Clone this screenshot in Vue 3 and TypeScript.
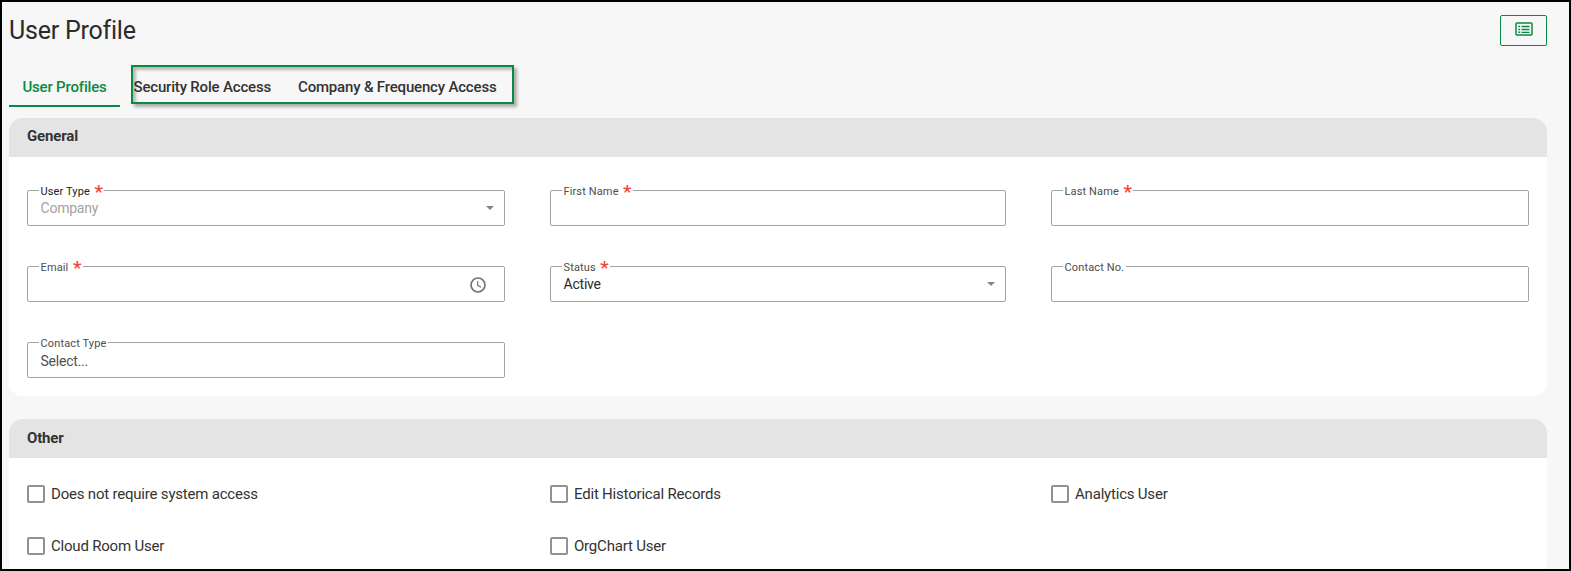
<script setup lang="ts">
import { ref } from 'vue'

interface Field {
  label: string
  required?: boolean
  value?: string
  tone?: 'disabled' | 'placeholder'
  icon?: 'arrow' | 'clock'
}

const tabs = ['User Profiles', 'Security Role Access', 'Company & Frequency Access']
const activeTab = ref(0)

const fields: Field[] = [
  { label: 'User Type', required: true, value: 'Company', tone: 'disabled', icon: 'arrow' },
  { label: 'First Name', required: true },
  { label: 'Last Name', required: true },
  { label: 'Email', required: true, icon: 'clock' },
  { label: 'Status', required: true, value: 'Active', icon: 'arrow' },
  { label: 'Contact No.' },
  { label: 'Contact Type', value: 'Select...', tone: 'placeholder' },
]

const options = ref([
  { label: 'Does not require system access', checked: false },
  { label: 'Edit Historical Records', checked: false },
  { label: 'Analytics User', checked: false },
  { label: 'Cloud Room User', checked: false },
  { label: 'OrgChart User', checked: false },
])
</script>

<template>
  <div class="page">
    <header class="top">
      <h1>User Profile</h1>
      <button class="list-btn" type="button" aria-label="List">
        <svg width="18" height="14" viewBox="0 0 18 14" fill="none" stroke="#0a8a43">
          <rect x="1" y="1" width="16" height="12" rx="1" stroke-width="1.5" />
          <path d="M6.5 4.5h8M6.5 7.5h8M6.5 10.3h8" stroke-width="1.3" />
          <path d="M3.3 4.5h1.8M3.3 7.5h1.8M3.3 10.3h1.8" stroke-width="1.4" />
        </svg>
      </button>
    </header>

    <nav class="tabs">
      <button class="tab" :class="{ active: activeTab === 0 }" type="button" @click="activeTab = 0">{{ tabs[0] }}</button>
      <div class="marked">
        <button
          v-for="(tab, i) in tabs.slice(1)"
          :key="tab"
          class="tab"
          :class="{ active: activeTab === i + 1 }"
          type="button"
          @click="activeTab = i + 1"
        >{{ tab }}</button>
      </div>
    </nav>

    <section class="card general">
      <h2>General</h2>
      <div class="grid fields">
        <div v-for="f in fields" :key="f.label" class="field">
          <span class="label" :class="{ strong: f.tone === 'disabled' }">{{ f.label }}<span v-if="f.required" class="star">*</span></span>
          <span class="value" :class="f.tone">{{ f.value }}</span>
          <svg v-if="f.icon === 'arrow'" class="arrow" width="8" height="4" viewBox="0 0 8 4"><path d="M0 0h8L4 4z" fill="#858585" /></svg>
          <svg v-if="f.icon === 'clock'" class="clock" width="16" height="16" viewBox="0 0 16 16" fill="none" stroke="#6f7679" stroke-width="1.7">
            <circle cx="8" cy="8" r="7" />
            <path d="M7.7 4v4.3l3.4 2" stroke-width="1.2" />
          </svg>
        </div>
      </div>
    </section>

    <section class="card other">
      <h2>Other</h2>
      <div class="grid checks">
        <label v-for="o in options" :key="o.label" class="check">
          <input v-model="o.checked" type="checkbox" />
          <span>{{ o.label }}</span>
        </label>
      </div>
    </section>
  </div>
</template>

<style>
body {
  overflow: hidden;
}
</style>

<style scoped>
.page {
  box-sizing: border-box;
  width: 1571px;
  height: 571px;
  overflow: hidden;
  border: 2px solid #000;
  background: #f7f7f7;
  padding: 13px 22px 0 7px;
  font-family: Roboto, 'Liberation Sans', sans-serif;
  color: #333;
}
.top {
  display: flex;
  justify-content: space-between;
  align-items: flex-start;
  height: 50px;
}
h1 {
  margin: 0;
  font-size: 25px;
  line-height: 31px;
  font-weight: 400;
  letter-spacing: -0.22px;
  color: #2b2b2b;
}
.list-btn {
  box-sizing: border-box;
  width: 47px;
  height: 31px;
  padding: 0 0 3px 0;
  display: flex;
  align-items: center;
  justify-content: center;
  border: 1px solid #0a8a43;
  border-radius: 2px;
  background: transparent;
}
.tabs {
  display: flex;
  gap: 11px;
  height: 53px;
}
.tab {
  border: 0;
  background: none;
  padding: 0;
  font: 500 15px/20px Roboto, 'Liberation Sans', sans-serif;
  letter-spacing: -0.18px;
  color: #333;
  white-space: nowrap;
}
.tabs > .tab {
  box-sizing: border-box;
  width: 111px;
  height: 42px;
  padding-top: 3px;
  border-bottom: 2px solid #0a8a43;
}
.tab.active {
  color: #0a8a43;
}
.marked {
  box-sizing: border-box;
  width: 383px;
  height: 39px;
  display: flex;
  gap: 27px;
  align-items: center;
  padding: 4px 0 0 0.5px;
  border: 2px solid #0a8a43;
  box-shadow: 3px 3px 3px rgba(0, 0, 0, 0.3), inset 3px 3px 3px rgba(0, 0, 0, 0.25);
}
.card {
  border-radius: 14px;
  background: #fff;
  overflow: hidden;
}
.general {
  height: 278px;
  margin-bottom: 23px;
}
.other {
  height: 156px;
}
h2 {
  box-sizing: border-box;
  margin: 0;
  height: 39px;
  padding: 0 18px;
  font-size: 15px;
  line-height: 36px;
  letter-spacing: -0.15px;
  font-weight: 700;
  background: #e4e4e4;
}
.other h2 {
  line-height: 38px;
}
.grid {
  display: grid;
  grid-template-columns: 478px 456px 478px;
  column-gap: 45px;
  padding: 0 18px;
}
.fields {
  padding-top: 33px;
  row-gap: 40px;
}
.field {
  box-sizing: border-box;
  position: relative;
  height: 36px;
  border: 1px solid #a3a3a3;
  border-radius: 2px;
  display: flex;
  align-items: center;
  padding: 0 10px 0 12.5px;
}
.label {
  position: absolute;
  left: 11px;
  top: -7px;
  height: 14px;
  padding: 0 1.5px;
  background: #fff;
  font-size: 11px;
  line-height: 16px;
  letter-spacing: 0.13px;
  color: #4d4d4d;
  white-space: nowrap;
}
.label.strong {
  color: #222;
}
.star {
  margin-left: 4.5px;
  font-size: 19px;
  font-weight: 500;
  line-height: 0;
  vertical-align: -3px;
  letter-spacing: 0;
  color: #f44336;
}
.value {
  flex: 1;
  font-size: 14px;
  line-height: 20px;
  letter-spacing: -0.22px;
  color: #2b2b2b;
}
.value.disabled {
  color: #a3a3a3;
}
.value.placeholder {
  padding-top: 2px;
  color: #505050;
}
.clock {
  margin: 1px 8px 0 0;
}
.checks {
  padding-top: 27px;
  row-gap: 34px;
}
.check {
  display: flex;
  align-items: center;
  gap: 6px;
  height: 18px;
  font-size: 15px;
  line-height: 18px;
  letter-spacing: -0.2px;
  white-space: nowrap;
}
.check input {
  appearance: none;
  box-sizing: border-box;
  width: 18px;
  height: 18px;
  margin: 0;
  border: 2px solid #929292;
  border-radius: 2px;
  background: #fff;
}
.check input:checked {
  background: #0a8a43;
}
</style>
